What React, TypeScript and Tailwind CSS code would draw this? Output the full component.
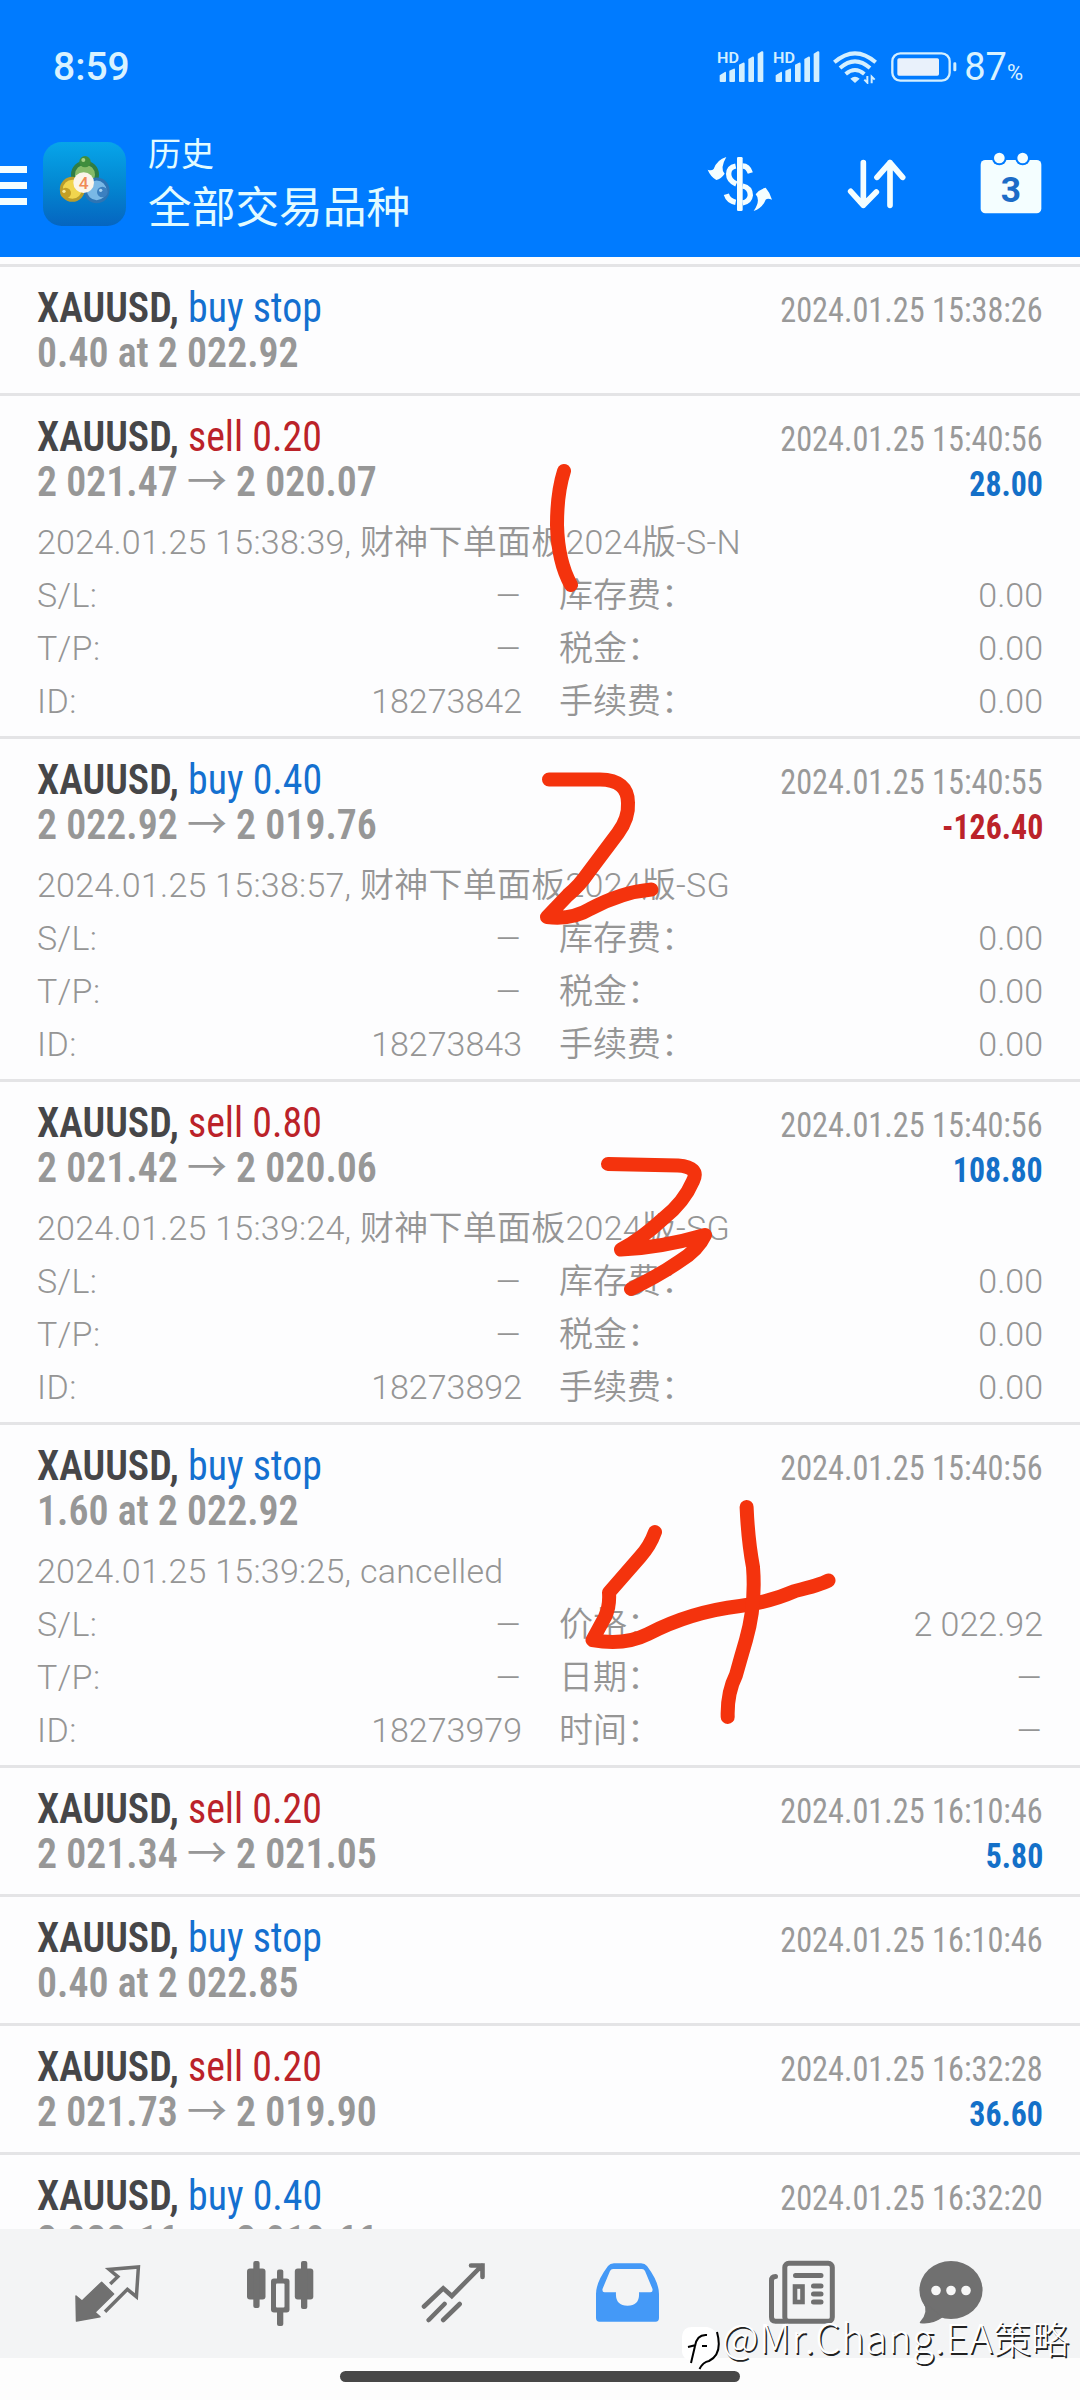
interface Field {
  label: string
  value: string
}

interface Deal {
  side: 'buy' | 'sell'
  action: string
  from: string
  to?: string
  time: string
  profit?: string
  comment?: string
  id?: string
  fields?: Field[]
}

const fees: Field[] = [
  { label: '库存费：', value: '0.00' },
  { label: '税金：', value: '0.00' },
  { label: '手续费：', value: '0.00' },
]

const deals: Deal[] = [
  { side: 'buy', action: 'buy stop', from: '0.40 at 2 022.92', time: '2024.01.25 15:38:26' },
  {
    side: 'sell',
    action: 'sell 0.20',
    from: '2 021.47',
    to: '2 020.07',
    time: '2024.01.25 15:40:56',
    profit: '28.00',
    comment: '2024.01.25 15:38:39, 财神下单面板2024版-S-N',
    id: '18273842',
    fields: fees,
  },
  {
    side: 'buy',
    action: 'buy 0.40',
    from: '2 022.92',
    to: '2 019.76',
    time: '2024.01.25 15:40:55',
    profit: '-126.40',
    comment: '2024.01.25 15:38:57, 财神下单面板2024版-SG',
    id: '18273843',
    fields: fees,
  },
  {
    side: 'sell',
    action: 'sell 0.80',
    from: '2 021.42',
    to: '2 020.06',
    time: '2024.01.25 15:40:56',
    profit: '108.80',
    comment: '2024.01.25 15:39:24, 财神下单面板2024版-SG',
    id: '18273892',
    fields: fees,
  },
  {
    side: 'buy',
    action: 'buy stop',
    from: '1.60 at 2 022.92',
    time: '2024.01.25 15:40:56',
    comment: '2024.01.25 15:39:25, cancelled',
    id: '18273979',
    fields: [
      { label: '价格：', value: '2 022.92' },
      { label: '日期：', value: '–' },
      { label: '时间：', value: '–' },
    ],
  },
  { side: 'sell', action: 'sell 0.20', from: '2 021.34', to: '2 021.05', time: '2024.01.25 16:10:46', profit: '5.80' },
  { side: 'buy', action: 'buy stop', from: '0.40 at 2 022.85', time: '2024.01.25 16:10:46' },
  { side: 'sell', action: 'sell 0.20', from: '2 021.73', to: '2 019.90', time: '2024.01.25 16:32:28', profit: '36.60' },
  { side: 'buy', action: 'buy 0.40', from: '2 022.16', to: '2 019.66', time: '2024.01.25 16:32:20' },
]

function Signal() {
  return (
    <svg width="48" height="32" viewBox="0 0 144 96" fill="#d3efff">
      <text x="0" y="35" fontSize="43" fontWeight="600" className="font-['Roboto']" textLength="66" lengthAdjust="spacingAndGlyphs">
        HD
      </text>
      <path d="M8 104l17-11q2 0 2 4v24q0 3-3 3H11q-3 0-3-3zM37 90l13-6q4-1 4 3v34q0 3-3 3H40q-3 0-3-3zM66 72l12-6q5-1 5 3v52q0 3-3 3H69q-3 0-3-3zM94 55l12-7q5-1 5 3v70q0 3-3 3H97q-3 0-3-3zM122 39l12-7q5-1 5 3v86q0 3-3 3h-11q-3 0-3-3z" transform="translate(0 -31)" />
    </svg>
  )
}

function StatusBar() {
  return (
    <div className="flex h-[134px] items-center justify-between pl-[53px] pr-[57px] font-['Roboto'] text-[#d9f2ff]">
      <span className="text-[39px] font-medium">8:59</span>
      <div className="flex items-center">
        <div className="flex gap-2">
          <Signal />
          <Signal />
        </div>
        <svg className="ml-3" width="44" height="34" viewBox="0 0 132 102" fill="none" stroke="#d3efff" strokeWidth="12">
          <path d="M4 37Q66 -17 128 37M21 54Q66 14 111 54M38 72Q66 48 94 72" />
          <path d="M52 86q14-12 28 0L66 99z" fill="#d3efff" stroke="none" />
          <path d="M103 78v20l-9-9M116 100V80l9 9" strokeWidth="6" />
        </svg>
        <svg className="ml-[14px]" width="66" height="30" viewBox="0 0 198 90">
          <rect x="4" y="4" width="172" height="82" rx="24" fill="none" stroke="#d3efff" strokeWidth="7" />
          <rect x="19" y="19" width="125" height="52" rx="5" fill="#e9f1fb" />
          <rect x="187" y="31" width="9" height="27" rx="4" fill="#d3efff" />
        </svg>
        <span className="ml-[7px] text-[38px] leading-none">
          87<span className="text-[22px]">%</span>
        </span>
      </div>
    </div>
  )
}

function AppLogo() {
  return (
    <svg className="ml-4" width="83" height="84" viewBox="0 0 249 252">
      <defs>
        <linearGradient id="logo-bg" x1="0" y1="0" x2="0" y2="1">
          <stop offset="0" stopColor="#07a5ea" />
          <stop offset="0.5" stopColor="#0388d2" />
          <stop offset="1" stopColor="#0565c0" />
        </linearGradient>
      </defs>
      <rect width="249" height="252" rx="56" fill="url(#logo-bg)" />
      <circle cx="126" cy="98" r="36" fill="#86bb68" stroke="#2f7d44" strokeWidth="12" />
      <circle cx="88" cy="142" r="33" fill="#f1d54e" stroke="#b99d2c" strokeWidth="9" />
      <circle cx="161" cy="145" r="34" fill="#79b8e6" stroke="#2d74b4" strokeWidth="9" />
      <circle cx="126" cy="59" r="17" fill="#3f8d3c" />
      <circle cx="121" cy="54" r="6" fill="#a5d184" />
      <circle cx="68" cy="153" r="16" fill="#c39f26" />
      <circle cx="63" cy="148" r="5" fill="#f7ea9c" />
      <circle cx="178" cy="150" r="16" fill="#3c80c0" />
      <circle cx="173" cy="145" r="5" fill="#a9d3f1" />
      <circle cx="122" cy="122" r="31" fill="#fbf5ea" />
      <text x="122" y="141" textAnchor="middle" fontSize="52" fontWeight="500" fill="#f08a55" className="font-['Roboto']">
        4
      </text>
    </svg>
  )
}

function Toolbar() {
  return (
    <div className="flex h-[123px] items-center pb-[23px] pr-[38px] text-[#f4feff]">
      <div className="mt-[2px] flex w-[27px] flex-col gap-[9px]">
        <div className="h-[7px] bg-[#f4feff]" />
        <div className="h-[7px] bg-[#f4feff]" />
        <div className="h-[7px] bg-[#f4feff]" />
      </div>
      <AppLogo />
      <div className="-mt-[7px] ml-[22px] flex-1 font-['Noto_Sans_CJK_SC'] text-[#e2fbff]">
        <div className="text-[33px] leading-[46px]">历史</div>
        <div className="text-[43.7px] leading-[58px]">全部交易品种</div>
      </div>
      <svg width="66" height="56" viewBox="50 347 198 168" fill="#f4feff">
        <path d="M108 350Q88 384 103 400Q92 416 78 419Q60 408 52 388Q64 392 70 386Q80 358 108 350z" />
        <path d="M190 512Q212 480 196 462Q208 446 226 442Q240 458 245 478Q232 472 226 478Q216 504 190 512z" />
        <rect x="140" y="350" width="17" height="162" rx="4" />
        <path d="M136 377Q115 381 115 401Q115 421 138 431M157 377Q173 377 180 398M157 437Q180 442 180 465Q178 484 157 488M136 486Q114 482 108 462" fill="none" stroke="#f4feff" strokeWidth="16" />
      </svg>
      <svg className="ml-[73px]" width="62" height="52" viewBox="465 352 186 156" fill="none" stroke="#f4feff" strokeWidth="17" strokeLinecap="round" strokeLinejoin="round">
        <path d="M517 366V494M479 452L517 494L556 454M597 494V366M558 410L597 366L635 410" />
      </svg>
      <svg className="-mt-[2px] ml-[72px]" width="62" height="62" viewBox="868 335 186 186">
        <rect x="870" y="359" width="182" height="160" rx="14" fill="#f4feff" />
        <circle cx="926" cy="353" r="22" fill="#007bff" />
        <circle cx="996" cy="353" r="22" fill="#007bff" />
        <circle cx="926" cy="353" r="16" fill="#f4feff" />
        <circle cx="996" cy="353" r="16" fill="#f4feff" />
        <text x="961" y="484" textAnchor="middle" fontSize="106" fontWeight="700" fill="#1c6cc7" className="font-['Roboto']">
          3
        </text>
      </svg>
    </div>
  )
}

function Dash() {
  return <span className="inline-block origin-right scale-x-[1.25]">–</span>
}

function DealRow({ deal }: { deal: Deal }) {
  const sideColor = deal.side === 'buy' ? 'text-[#1470d0]' : 'text-[#bb2229]'
  const profitColor = deal.profit?.startsWith('-') ? 'text-[#bb2229]' : 'text-[#1470c8]'
  const left = ['S/L:', 'T/P:', 'ID:']

  return (
    <div
      className={`shrink-0 overflow-hidden border-t-[3px] border-[#e4e4e6] px-[37px] pt-[18px] ${
        deal.fields ? 'h-[343px]' : 'h-[129px]'
      }`}
    >
      <div className="flex h-[45px] items-baseline justify-between font-['Roboto_Condensed'] text-[42px] leading-[45px]">
        <div className="origin-left scale-x-[0.949]">
          <span className="font-semibold text-[#464648]">XAUUSD, </span>
          <span className={sideColor}>{deal.action}</span>
        </div>
        <span className="origin-right scale-x-[0.922] text-[35px] text-[#999]">{deal.time}</span>
      </div>
      <div className="flex h-[45px] items-baseline justify-between font-['Roboto_Condensed'] text-[42px] font-semibold leading-[45px] text-[#979797]">
        <div className="origin-left scale-x-[0.949]">
          {deal.from}
          {deal.to && (
            <>
              {' '}
              <span className="font-['Noto_Sans_CJK_SC'] font-normal leading-[0]">→</span> {deal.to}
            </>
          )}
        </div>
        {deal.profit && (
          <span className={`origin-right scale-x-[0.91] text-[35px] font-bold ${profitColor}`}>{deal.profit}</span>
        )}
      </div>
      {deal.fields && (
        <div className="mt-3 font-['Roboto','Noto_Sans_CJK_SC',sans-serif] text-[34px] font-[350] leading-[53px] text-[#959595]">
          <div className="h-[53px] tracking-[0.25px]">{deal.comment}</div>
          {deal.fields.map((field, i) => (
            <div key={field.label} className="flex h-[53px]">
              <div className="flex w-[485px] justify-between">
                <span className="tracking-[0.4px]">{left[i]}</span>
                {i === 2 ? <span>{deal.id}</span> : <Dash />}
              </div>
              <div className="ml-[37px] flex flex-1 justify-between">
                <span>{field.label}</span>
                {field.value === '–' ? <Dash /> : <span>{field.value}</span>}
              </div>
            </div>
          ))}
        </div>
      )}
    </div>
  )
}

function TabBar() {
  return (
    <nav className="flex h-[129px] shrink-0 bg-[#f3f4f5] pl-[74px] pt-[30px]">
      <svg width="68" height="70" viewBox="74 119 68 70">
        <path d="M76 156l6 5 19.600-18.700L113.600 154 95 172.300l5 4.400L76.500 181z" fill="#707070" stroke="#707070" strokeWidth="1.500" strokeLinejoin="round" />
        <path d="M110.200 144l7.600-7.300-8.600-7.200 29.200-2.500-2 29.700-9-7.400L105 171.700" fill="none" stroke="#707070" strokeWidth="3.500" />
      </svg>
      <svg className="ml-[103px]" width="72" height="70" viewBox="245 119 72 70" fill="#707070">
        <rect x="247" y="128.500" width="18.500" height="31" rx="3" />
        <rect x="253.300" y="121" width="6.300" height="47" rx="2" />
        <rect x="271" y="138.500" width="18.500" height="34" rx="3" />
        <rect x="277" y="129.500" width="6.300" height="56.500" rx="2" />
        <rect x="276" y="143.500" width="8.500" height="24" rx="1" fill="#f3f4f5" />
        <rect x="294.800" y="128.500" width="18.500" height="31" rx="3" />
        <rect x="301" y="121" width="6.300" height="48" rx="2" />
      </svg>
      <svg className="ml-[103px]" width="68" height="70" viewBox="420 119 68 70" fill="none" stroke="#707070" strokeWidth="4.600" strokeLinecap="round">
        <path d="M424 166.500L443.200 148.300L451.800 156L482 125.500M471 125.500H482.500V137M428.700 180L444.500 164M443.200 180L459.700 164" />
      </svg>
      <svg className="ml-[106px]" width="67" height="70" viewBox="594 119 67 70">
        <path d="M608 126Q610 123.300 614 123.300H641Q645 123.300 647 126Q659 142 659 154V178Q659 181.700 655.500 181.700H599.500Q596 181.700 596 178V154Q596 142 608 126zM613 129Q611 129 610 131L602.500 149Q602 152.300 604.500 152.300H616Q615 165.700 627.500 165.700Q640 165.700 639 152.300H650.500Q653 152.300 652.500 149L645 131Q644 129 642 129z" fill="#4499f7" fillRule="evenodd" />
      </svg>
      <svg className="ml-[106px]" width="69" height="70" viewBox="767 119 69 70" fill="none" stroke="#707070" strokeWidth="5" strokeLinecap="round">
        <rect x="784.800" y="123.300" width="47.500" height="58" rx="4" />
        <path d="M775.500 136.500Q771.500 136.500 771.500 140.500V177Q771.500 181.300 775.500 181.300H785M795.500 135.500H821M813.500 146H821M813.500 154H821M813.500 162H821" />
        <rect x="795" y="146.500" width="7.500" height="15.500" strokeWidth="4.600" />
      </svg>
      <svg className="ml-[82px]" width="68" height="70" viewBox="918 119 68 70">
        <ellipse cx="951" cy="150" rx="31.600" ry="29" fill="#707070" />
        <path d="M924 162Q930 172 920.500 182.500Q932 184 942 177z" fill="#707070" stroke="#707070" strokeWidth="1.500" strokeLinejoin="round" />
        <circle cx="936" cy="150.500" r="4.800" fill="#f7f7f7" />
        <circle cx="951" cy="150.500" r="4.800" fill="#f7f7f7" />
        <circle cx="966" cy="150.500" r="4.800" fill="#f7f7f7" />
      </svg>
    </nav>
  )
}

// Hand-drawn numbering laid over the list
function PenMarks() {
  return (
    <svg
      className="pointer-events-none absolute left-0 top-0"
      width="1080"
      height="2400"
      viewBox="0 0 1080 2400"
      fill="none"
      stroke="#f4330d"
      strokeWidth="14"
      strokeLinecap="round"
      strokeLinejoin="round"
    >
      <path d="M564 471Q557 493 557 525Q558 562 571 585" />
      <path d="M549 779.500H600Q628 780 628 803Q629 818 618 833L588 873Q580 885 568 895L547 917Q572 920 590 909Q622 892 651.500 889.500" />
      <path d="M608 1164L678 1165.500Q700 1167 693 1181Q684 1202 664 1218Q640 1240 621 1249.500Q660 1248 705 1235Q698 1250 680 1261Q660 1275 631 1289" />
      <path d="M655 1532Q650 1546 640 1557L609 1592.500Q610 1606 605 1617L592.500 1640Q624 1646 648 1634Q690 1612 740 1606Q770 1602 795 1591Q820 1585 828.500 1580.500" />
      <path d="M746.600 1507Q748 1540 753 1567Q756 1605 746 1640Q741 1657 736 1675Q727 1693 727.700 1717" />
    </svg>
  )
}

function Watermark() {
  return (
    <div className="absolute left-[680px] top-[2302px] flex items-center text-white">
      <svg className="mt-4" width="42" height="54" viewBox="0 0 42 54">
        <path d="M12 9H27Q38 11 38 24V34Q38 44 26 46L20 52L19 44Q3 44 2 34V18Q3 9 12 9z" fill="#fff" />
        <path d="M37 14Q43 36 29 43Q23 44 19.500 51" fill="none" stroke="#000" strokeWidth="2" />
        <path d="M11 45L15 28Q17 16 27 17M8 29L16 27M22 28h5" fill="none" stroke="#000" strokeWidth="2" />
      </svg>
      <span className="-mt-[2px] whitespace-nowrap font-['Noto_Sans_CJK_SC'] text-[38px] font-light leading-[54px] [text-shadow:1.5px_1.5px_0_#222]">
        <span className="text-[40px] tracking-[0.7px]">@Mr.Chang.EA</span>策略
      </span>
    </div>
  )
}

export default function App() {
  return (
    <div className="relative flex h-[2400px] w-[1080px] flex-col overflow-hidden bg-[#fdfdfe]">
      <header className="h-[257px] shrink-0 bg-[#007bff]">
        <StatusBar />
        <Toolbar />
      </header>
      <main className="flex min-h-0 flex-1 flex-col overflow-hidden pt-[7px]">
        {deals.map((deal, i) => (
          <DealRow key={i} deal={deal} />
        ))}
      </main>
      <TabBar />
      <div className="flex h-[42px] shrink-0 justify-center bg-[#fdfdfd] pt-[13px]">
        <div className="h-[11px] w-[400px] rounded-full bg-[#474747]" />
      </div>
      <PenMarks />
      <Watermark />
    </div>
  )
}
